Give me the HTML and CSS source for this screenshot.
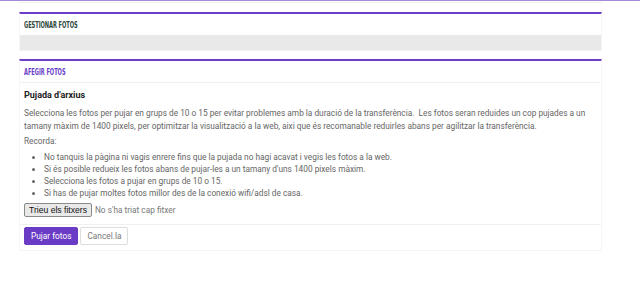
FILE: index.html
```html
<!DOCTYPE html>
<html>
<head>
<meta charset="utf-8">
<link rel="stylesheet" href="styles.css">
</head>
<body>
<div class="topline"></div>
<div class="wrap">
  <div class="stub"></div>
  <div class="panel">
    <div class="panel-head"><span class="title title-green">GESTIONAR FOTOS</span></div>
    <div class="panel-grey"></div>
  </div>
  <div class="panel">
    <div class="panel-head sep"><span class="title title-purple">AFEGIR FOTOS</span></div>
    <div class="panel-body">
      <h4 class="subtitle">Pujada d'arxius</h4>
      <p class="txt">Selecciona les fotos per pujar en grups de 10 o 15 per evitar problemes amb la duració de la transferència.&nbsp; Les fotos seran reduides un cop pujades a un tamany màxim de 1400 pixels, per optimitzar la visualització a la web, aixi que és recomanable reduirles abans per agilitzar la transferència.</p>
      <p class="txt">Recorda:</p>
      <ul class="list">
        <li>No tanquis la pàgina ni vagis enrere fins que la pujada no hagi acavat i vegis les fotos a la web.</li>
        <li>Si és posible redueix les fotos abans de pujar-les a un tamany d'uns 1400 pixels màxim.</li>
        <li>Selecciona les fotos a pujar en grups de 10 o 15.</li>
        <li>Si has de pujar moltes fotos millor des de la conexió wifi/adsl de casa.</li>
      </ul>
      <div class="file">
        <span class="filebtn">Trieu els fitxers</span>
        <span class="filetxt">No s'ha triat cap fitxer</span>
      </div>
    </div>
    <div class="panel-foot">
      <span class="btn btn-primary">Pujar fotos</span>
      <span class="btn btn-default">Cancel.la</span>
    </div>
  </div>
</div>
</body>
</html>
```
FILE: styles.css
```css
html, body {
  margin: 0;
  padding: 0;
  background: #fff;
}
body {
  font-family: Roboto, "Liberation Sans", sans-serif;
  width: 640px;
  height: 296px;
  overflow: hidden;
}
.topline {
  height: 1px;
  background: #a58ad8;
}
.wrap {
  width: 583px;
  margin-left: 19px;
}
.stub {
  height: 1px;
  border-bottom: 1px solid #f0f0f0;
  margin-bottom: 9px;
}
.panel {
  border-top: 2px solid #6d3fc8;
  border-left: 1px solid #f6f6f6;
  border-right: 1px solid #f6f6f6;
  border-bottom: 1px solid #f3f3f3;
  margin-bottom: 8px;
  box-sizing: border-box;
}
.panel-head {
  height: 21px;
  display: flex;
  align-items: center;
  padding-left: 4px;
}
.panel-head.sep {
  border-bottom: 1px solid #f0f0f0;
}
.title {
  font-family: "DejaVu Sans Condensed", "DejaVu Sans", sans-serif;
  font-stretch: condensed;
  font-weight: bold;
  font-size: 9.5px;
  letter-spacing: -0.1px;
  display: inline-block;
  transform: scaleX(0.6);
  transform-origin: left center;
}
.title-green { color: #2e4a3a; }
.title-purple { color: #6b3fcb; }
.panel-grey {
  height: 15px;
  background: #e9e9e9;
}
.panel-body {
  padding: 5px 4px 7px;
  color: #666;
  font-size: 8.3px;
  font-weight: 400;
}
.subtitle {
  margin: 2px 0 7px;
  font-size: 9px;
  font-weight: 700;
  color: #222;
}
.txt {
  margin: 0 0 2px;
  line-height: 13px;
}
.list {
  margin: 3px 0 4px;
  padding-left: 20px;
  line-height: 12px;
}
.file {
  display: flex;
  align-items: center;
  gap: 3px;
  font-size: 8.3px;
}
.filebtn {
  font-family: "Liberation Sans", Arial, sans-serif;
  font-size: 8.6px;
  color: #111;
  background: #e9e9e9;
  border: 1px solid #8a8a8a;
  border-radius: 2px;
  padding: 1px 4px;
  line-height: 10px;
}
.filetxt {
  color: #777;
}
.panel-foot {
  border-top: 1px solid #f0f0f0;
  padding: 2px 4px 5px;
  display: flex;
  gap: 2px;
}
.btn {
  font-size: 8.3px;
  height: 18px;
  box-sizing: border-box;
  display: inline-flex;
  align-items: center;
  padding: 0 6px;
  border-radius: 2px;
}
.btn-primary {
  background: #6a3bc5;
  color: #fff;
  border: 1px solid #6a3bc5;
}
.btn-default {
  background: #fff;
  color: #777;
  border: 1px solid #ddd;
}
```
